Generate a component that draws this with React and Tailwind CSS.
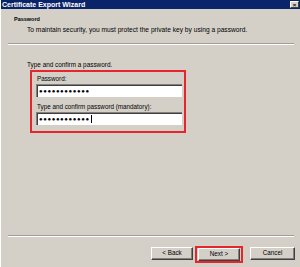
const font = "font-['Liberation_Sans',Arial,sans-serif]";

const Dots = ({ cursor }) => (
  <div className="flex h-full items-center pl-[2px]">
    <span className="text-[6px] leading-none tracking-[0.6px] text-black">●●●●●●●●●●●●</span>
    {cursor && <span className="ml-[1px] h-[8px] w-px bg-black" />}
  </div>
);

const Field = ({ label, cursor, className = "" }) => (
  <div className={className}>
    <div className="h-[9px] pl-[5px] text-[6.3px] leading-[9px] text-black">{label}</div>
    <div className="ml-[4px] mt-[1px] h-[13px] w-[146px] border-l border-t border-[#808080] border-b-[#e8e6e1] border-r-[#e8e6e1] bg-white shadow-[inset_1px_1px_0_#404040]">
      <Dots cursor={cursor} />
    </div>
  </div>
);

const Button = ({ children }) => (
  <div className="flex h-[13px] w-[42px] items-center justify-center border border-t-white border-l-white border-b-[#404040] border-r-[#404040] bg-[#d4d0c8] text-[6.3px] leading-none text-black shadow-[inset_-1px_-1px_0_#808080]">
    {children}
  </div>
);

export default function App() {
  return (
    <div className={`${font} flex h-[267px] w-[300px] flex-col border-l border-white bg-[#d4d0c8]`}>
      <div className="flex h-[9px] items-center justify-between bg-[#0a246a] pl-[1px] pr-[1px]">
        <span className="text-[7px] font-bold leading-none text-white">Certificate Export Wizard</span>
        <div className="flex h-[7px] w-[9px] items-center justify-center border border-t-white border-l-white border-b-[#404040] border-r-[#404040] bg-[#d4d0c8] text-[6px] font-bold leading-none text-black">
          ×
        </div>
      </div>

      <div className="h-[34px] pl-[13px] pt-[6px]">
        <div className="h-[9px] text-[5.5px] font-bold leading-[9px] text-black">Password</div>
        <div className="mt-[1px] h-[9px] pl-[13px] text-[6.65px] leading-[9px] text-black">
          To maintain security, you must protect the private key by using a password.
        </div>
      </div>

      <div className="ml-[7px] mr-[6px] h-[2px] border-t border-b border-t-[#a09d96] border-b-white" />

      <div className="pl-[26px] pt-[15px]">
        <div className="h-[9px] text-[6.4px] leading-[9px] text-black">Type and confirm a password.</div>
        <div className="ml-[3px] mt-[1px] h-[63px] w-[156px] border-2 border-[#e8242c] pt-[2px]">
          <Field label="Password:" />
          <Field label="Type and confirm password (mandatory):" cursor className="mt-[5px]" />
        </div>
      </div>

      <div className="flex-1" />

      <div className="ml-[7px] mr-[6px] h-[2px] border-t border-b border-t-[#a09d96] border-b-white" />

      <div className="flex h-[30px] items-start justify-end gap-[2px] pr-[5px] pt-[9px]">
        <div className="mt-[1px]">
          <Button>&lt; Back</Button>
        </div>
        <div className="border-2 border-[#e8242c] p-0 pl-[1px] pr-[1px]">
          <Button>Next &gt;</Button>
        </div>
        <div className="ml-[5px] mt-[1px]">
          <div className="flex h-[13px] w-[45px] items-center justify-center border border-t-white border-l-white border-b-[#404040] border-r-[#404040] text-[6.3px] leading-none text-black shadow-[inset_-1px_-1px_0_#808080]">
            Cancel
          </div>
        </div>
      </div>
    </div>
  );
}
